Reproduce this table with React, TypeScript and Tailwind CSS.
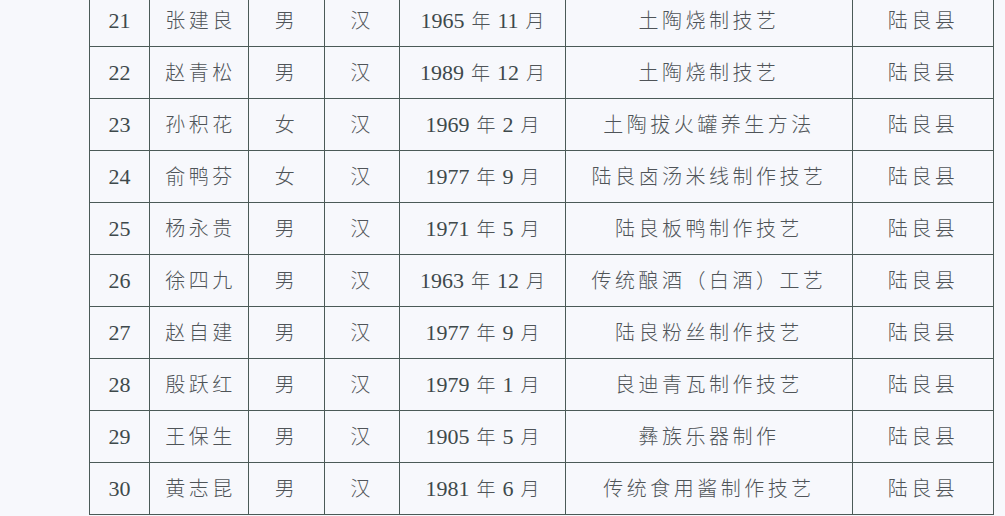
// App.tsx
const rows = [
  { no: 21, name: "张建良", sex: "男", nation: "汉", year: "1965", month: "11", item: "土陶烧制技艺", area: "陆良县" },
  { no: 22, name: "赵青松", sex: "男", nation: "汉", year: "1989", month: "12", item: "土陶烧制技艺", area: "陆良县" },
  { no: 23, name: "孙积花", sex: "女", nation: "汉", year: "1969", month: "2", item: "土陶拔火罐养生方法", area: "陆良县" },
  { no: 24, name: "俞鸭芬", sex: "女", nation: "汉", year: "1977", month: "9", item: "陆良卤汤米线制作技艺", area: "陆良县" },
  { no: 25, name: "杨永贵", sex: "男", nation: "汉", year: "1971", month: "5", item: "陆良板鸭制作技艺", area: "陆良县" },
  { no: 26, name: "徐四九", sex: "男", nation: "汉", year: "1963", month: "12", item: "传统酿酒（白酒）工艺", area: "陆良县" },
  { no: 27, name: "赵自建", sex: "男", nation: "汉", year: "1977", month: "9", item: "陆良粉丝制作技艺", area: "陆良县" },
  { no: 28, name: "殷跃红", sex: "男", nation: "汉", year: "1979", month: "1", item: "良迪青瓦制作技艺", area: "陆良县" },
  { no: 29, name: "王保生", sex: "男", nation: "汉", year: "1905", month: "5", item: "彝族乐器制作", area: "陆良县" },
  { no: 30, name: "黄志昆", sex: "男", nation: "汉", year: "1981", month: "6", item: "传统食用酱制作技艺", area: "陆良县" },
];

const cell = "border-[1.5px] border-[#4b5a57] text-center align-middle p-0";
const cjk = "font-['Liberation_Serif','Noto_Sans_CJK_SC',serif] font-light text-[20px] tracking-[3.5px] text-[#4f5458]";
const num = "font-['Liberation_Serif',serif] font-normal text-[22px] text-[#3e494b]";

export default function App() {
  return (
    <div className="w-[1005px] h-[516px] overflow-hidden bg-[#f7f8fc]">
      <table className="ml-[89px] mt-[-6px] border-collapse table-fixed w-[904px]">
        <colgroup>
          <col className="w-[60px]" />
          <col className="w-[99px]" />
          <col className="w-[76px]" />
          <col className="w-[75px]" />
          <col className="w-[166px]" />
          <col className="w-[287px]" />
          <col className="w-[141px]" />
        </colgroup>
        <tbody>
          {rows.map((r) => (
            <tr key={r.no} className="h-[52px]">
              <td className={`${cell} ${num}`}>{r.no}</td>
              <td className={`${cell} ${cjk} pl-[3px]`}>{r.name}</td>
              <td className={`${cell} ${cjk}`}>{r.sex}</td>
              <td className={`${cell} ${cjk}`}>{r.nation}</td>
              <td className={`${cell} ${num} whitespace-nowrap`}>
                {r.year}
                <span className="mx-[7px] font-['Noto_Sans_CJK_SC',sans-serif] font-light text-[19px] text-[#4f5458]">年</span>
                {r.month}
                <span className="ml-[7px] font-['Noto_Sans_CJK_SC',sans-serif] font-light text-[19px] text-[#4f5458]">月</span>
              </td>
              <td className={`${cell} ${cjk}`}>{r.item}</td>
              <td className={`${cell} ${cjk}`}>{r.area}</td>
            </tr>
          ))}
        </tbody>
      </table>
    </div>
  );
}
